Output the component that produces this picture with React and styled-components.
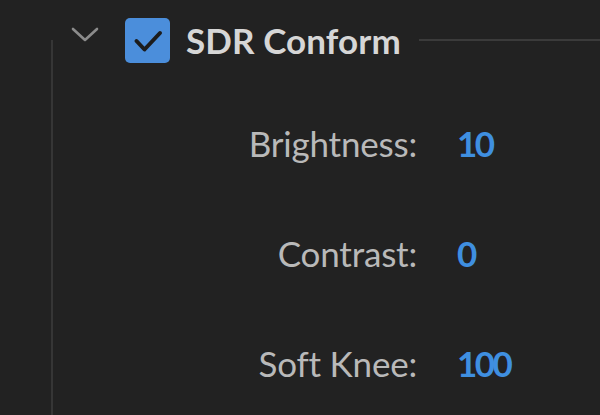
import React from "react";
import styled, { createGlobalStyle } from "styled-components";

const Global = createGlobalStyle`
  html, body { margin: 0; padding: 0; background: #222222; }
  body { width: 600px; height: 415px; overflow: hidden; font-family: Lato, "Liberation Sans", sans-serif; }
`;

const Page = styled.div`
  width: 600px;
  height: 415px;
  background: #222222;
  display: flex;
  flex-direction: column;
  overflow: hidden;
`;

const Header = styled.div`
  display: flex;
  align-items: center;
  height: 80px;
`;

const RailStub = styled.div`
  width: 2px;
  height: 40px;
  align-self: flex-end;
  margin-left: 51px;
  background: #363636;
`;

const Chevron = styled.svg`
  width: 28px;
  height: 15px;
  margin-left: 18px;
  margin-bottom: 12px;
  flex: none;
`;

const Check = styled.div`
  width: 45px;
  height: 45px;
  margin-left: 26px;
  border-radius: 5px;
  background: #4b8edb;
  display: flex;
  align-items: center;
  justify-content: center;
  flex: none;
`;

const Title = styled.span`
  margin-left: 16px;
  font-size: 35px;
  font-weight: 700;
  color: #d6d6d6;
  letter-spacing: 0.1px;
  white-space: nowrap;
`;

const Rule = styled.div`
  flex: 1;
  height: 2px;
  margin-left: 18px;
  background: #3b3b3b;
`;

const Body = styled.div`
  flex: 1;
  margin-left: 51px;
  border-left: 2px solid #363636;
  display: grid;
  grid-template-columns: 364px auto;
  column-gap: 40px;
  row-gap: 70px;
  align-content: start;
  padding-top: 43px;
`;

const Label = styled.span`
  font-size: 35px;
  line-height: 40px;
  color: #b9b9b9;
  text-align: right;
  letter-spacing: -0.2px;
  white-space: nowrap;
`;

const Value = styled.span`
  font-size: 35px;
  font-weight: 700;
  line-height: 40px;
  color: #3f8fe0;
  letter-spacing: -2.5px;
  white-space: nowrap;
`;

const rows = [
  { label: "Brightness:", value: "10" },
  { label: "Contrast:", value: "0" },
  { label: "Soft Knee:", value: "100" },
];

export default function App() {
  return (
    <Page>
      <Global />
      <Header>
        <RailStub />
        <Chevron viewBox="0 0 28 15">
          <path d="M2 2 L14 13 L26 2" fill="none" stroke="#8c8c8c" strokeWidth="2.6" strokeLinecap="round" strokeLinejoin="round" />
        </Chevron>
        <Check>
          <svg width="45" height="45" viewBox="0 0 45 45">
            <path d="M11.5 23 L19.5 31.5 L35 15" fill="none" stroke="#1c1c1c" strokeWidth="4" strokeLinecap="round" strokeLinejoin="round" />
          </svg>
        </Check>
        <Title>SDR Conform</Title>
        <Rule />
      </Header>
      <Body>
        {rows.map((r) => (
          <React.Fragment key={r.label}>
            <Label>{r.label}</Label>
            <Value>{r.value}</Value>
          </React.Fragment>
        ))}
      </Body>
    </Page>
  );
}
